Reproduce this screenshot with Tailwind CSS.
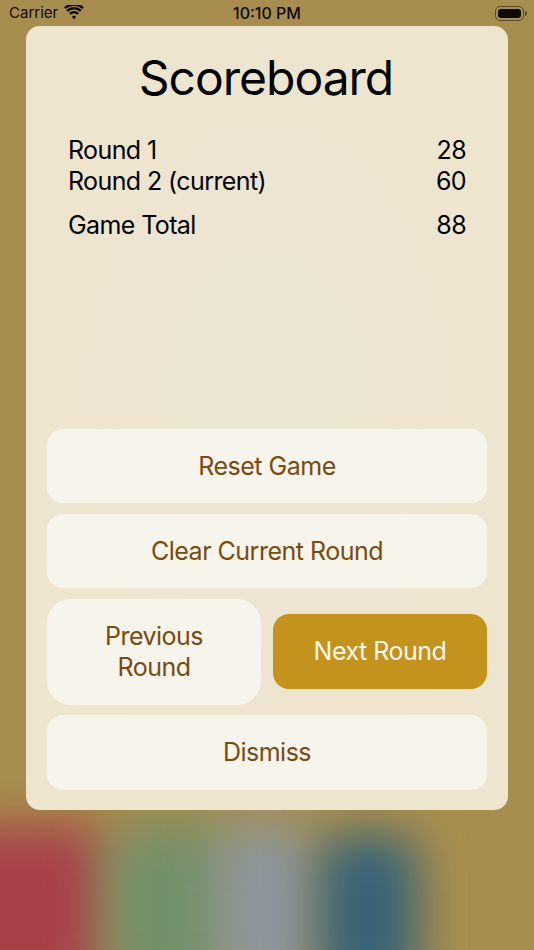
<!DOCTYPE html>
<html lang="en">
<head>
    <meta charset="UTF-8">
    <meta name="viewport" content="width=device-width, initial-scale=1.0">
    <title>Scoreboard</title>
    <script src="https://cdn.jsdelivr.net/npm/@tailwindcss/browser@4"></script>
</head>
<body class="m-0">
    <div class="relative w-[534px] h-[950px] overflow-hidden bg-[#a88e4e] font-['Inter','Roboto',sans-serif] text-black">
        <!-- blurred app icons behind the sheet -->
        <div class="absolute left-[-60px] top-[825px] w-[165px] h-[170px] rounded-[30px] bg-[#a8414a] blur-[24px]"></div>
        <div class="absolute left-[108px] top-[825px] w-[125px] h-[170px] rounded-[30px] bg-[#71906a] blur-[26px]"></div>
        <div class="absolute left-[215px] top-[825px] w-[100px] h-[170px] rounded-[30px] bg-[#8c979f] blur-[26px]"></div>
        <div class="absolute left-[318px] top-[835px] w-[100px] h-[160px] rounded-[24px] bg-[#376377] blur-[24px]"></div>

        <div class="relative flex flex-col h-full">
            <!-- status bar -->
            <div class="relative flex items-center h-[26px] pl-[9px] pr-[7px] text-[15px] leading-[26px] text-[#0c0a04]">
                <span>Carrier</span>
                <svg class="ml-[6px] mb-[2px]" width="20" height="15" viewBox="0 0 20 15">
                    <path d="M10 10.800a2.600 2.600 0 0 1 2 .9L10 14.400 8 11.700a2.600 2.600 0 0 1 2-.9z" fill="#0c0a04"/>
                    <path d="M5.800 8.900a6.200 6.200 0 0 1 8.400 0" fill="none" stroke="#0c0a04" stroke-width="2.600"/>
                    <path d="M3.100 5.900a10.200 10.200 0 0 1 13.800 0" fill="none" stroke="#0c0a04" stroke-width="2.600"/>
                    <path d="M0.900 3.200a13.600 13.600 0 0 1 18.200 0" fill="none" stroke="#0c0a04" stroke-width="2.400"/>
                </svg>
                <span class="absolute left-0 right-0 text-center text-[16px] font-medium">10:10 PM</span>
                <div class="ml-auto flex items-center">
                    <div class="w-[29px] h-[15px] rounded-[5px] border border-[#0c0a04]/50 p-[2px]">
                        <div class="w-full h-full rounded-[3px] bg-[#0c0a04]"></div>
                    </div>
                    <div class="w-[2px] h-[5px] ml-[1px] rounded-r-[2px] bg-[#0c0a04]/50"></div>
                </div>
            </div>

            <!-- sheet -->
            <div class="flex flex-col h-[784px] mx-[26px] rounded-[14px] bg-[radial-gradient(ellipse_at_center,#ece5d4,#efe5ce)] px-[21px] pb-[20px]">
                <h1 class="mt-[22px] pr-[2px] text-center text-[48px] leading-[60px] font-normal tracking-[-1px]">Scoreboard</h1>
                <div class="mt-[27px] px-[21px] text-[25px] leading-[31px] tracking-[-0.6px]">
                    <div class="flex justify-between"><span>Round 1</span><span>28</span></div>
                    <div class="flex justify-between"><span>Round 2 (current)</span><span>60</span></div>
                    <div class="flex justify-between mt-[13px]"><span>Game Total</span><span>88</span></div>
                </div>
                <div class="mt-auto flex flex-col gap-[11px] text-[25px] leading-[31px] tracking-[-0.5px] text-[#7a4a0e]">
                    <button class="h-[74px] rounded-[16px] bg-[#f7f4ec]">Reset Game</button>
                    <button class="h-[74px] rounded-[16px] bg-[#f7f4ec]">Clear Current Round</button>
                    <div class="flex items-start gap-[12px]">
                        <button class="flex-1 h-[106px] rounded-[24px] bg-[#f7f4ec]">Previous<br>Round</button>
                        <button class="flex-1 h-[75px] mt-[15px] rounded-[16px] bg-[#c4931e] text-[#fbf7ec]">Next Round</button>
                    </div>
                    <button class="h-[75px] -mt-px rounded-[16px] bg-[#f7f4ec]">Dismiss</button>
                </div>
            </div>
        </div>
    </div>
</body>
</html>
